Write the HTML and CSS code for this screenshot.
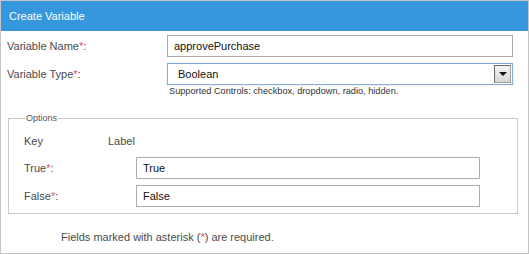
FILE: index.html
```html
<!DOCTYPE html>
<html lang="en">
<head>
    <meta charset="utf-8">
    <title>Create Variable</title>
    <link rel="stylesheet" href="styles.css">
</head>
<body>
    <div class="panel">
        <div class="header">Create Variable</div>
        <div class="content">
            <div class="row">
                <label class="field-label">Variable Name<span class="req">*</span>:</label>
                <input class="text" type="text" value="approvePurchase">
            </div>
            <div class="row row-type">
                <label class="field-label">Variable Type<span class="req">*</span>:</label>
                <div class="select">
                    <span class="select-value">Boolean</span>
                    <span class="select-btn"><span class="arrow"></span></span>
                </div>
            </div>
            <div class="hint">Supported Controls: checkbox, dropdown, radio, hidden.</div>

            <fieldset class="options">
                <legend>Options</legend>
                <div class="opt-head">
                    <span class="col-key">Key</span>
                    <span>Label</span>
                </div>
                <div class="opt-row">
                    <label class="opt-label">True<span class="req">*</span>:</label>
                    <input class="text opt-input" type="text" value="True">
                </div>
                <div class="opt-row">
                    <label class="opt-label">False<span class="req">*</span>:</label>
                    <input class="text opt-input" type="text" value="False">
                </div>
            </fieldset>

            <div class="note">Fields marked with asterisk (<span class="req">*</span>) are required.</div>
        </div>
    </div>
</body>
</html>
```

FILE: styles.css
```css
html, body {
    margin: 0;
    padding: 0;
    background: #fff;
}

body {
    font-family: "Liberation Sans", Arial, sans-serif;
    font-size: 11px;
    color: #4a4a4a;
}

.panel {
    width: 529px;
    height: 254px;
    border: 1px solid #c4c4c4;
    box-sizing: border-box;
}

.header {
    height: 30px;
    background: #3597de;
    color: #fff;
    display: flex;
    align-items: center;
    padding-left: 8px;
    font-size: 11px;
}

.content {
    padding: 4px 0 0 6px;
}

.row {
    display: flex;
    align-items: center;
    height: 22px;
}

.row-type {
    margin-top: 6px;
}

.field-label {
    width: 160px;
}

.req {
    color: #e0506a;
}

.text {
    box-sizing: border-box;
    height: 22px;
    width: 346px;
    border: 1px solid #ababab;
    padding: 0 6px;
    font-family: "Liberation Sans", Arial, sans-serif;
    font-size: 11px;
    color: #111;
    outline: none;
    margin: 0;
}

.select {
    box-sizing: border-box;
    width: 346px;
    height: 22px;
    border: 1px solid #86a9dc;
    box-shadow: 0 0 1px #aac4ee;
    display: flex;
    align-items: center;
    justify-content: space-between;
    padding: 0 1px 0 10px;
    color: #111;
}

.select-btn {
    box-sizing: border-box;
    width: 17px;
    height: 18px;
    border: 1px solid #6c6c6c;
    border-right-color: #a0a0a0;
    border-bottom-color: #a0a0a0;
    background: linear-gradient(#f4f4f4, #d6d6d6);
    display: flex;
    align-items: center;
    justify-content: center;
}

.arrow {
    width: 0;
    height: 0;
    border-left: 4px solid transparent;
    border-right: 4px solid transparent;
    border-top: 4px solid #111;
}

.hint {
    margin: 1px 0 0 162px;
    font-size: 9.2px;
    color: #333;
}

.options {
    margin: 17px 0 0 1px;
    width: 510px;
    box-sizing: border-box;
    height: 101px;
    border: 1px solid #c8c8c8;
    padding: 10px 0 0 15px;
}

.options legend {
    font-size: 9px;
    color: #555;
    padding: 0 1px;
    margin-left: 1px;
}

.opt-head {
    display: flex;
    height: 16px;
    align-items: center;
}

.col-key {
    width: 84px;
}

.opt-row {
    display: flex;
    align-items: center;
    margin-top: 6px;
}

.opt-head + .opt-row {
    margin-top: 8px;
}

.opt-label {
    width: 112px;
}

.opt-input {
    width: 344px;
}

.note {
    margin: 17px 0 0 54px;
}
```
